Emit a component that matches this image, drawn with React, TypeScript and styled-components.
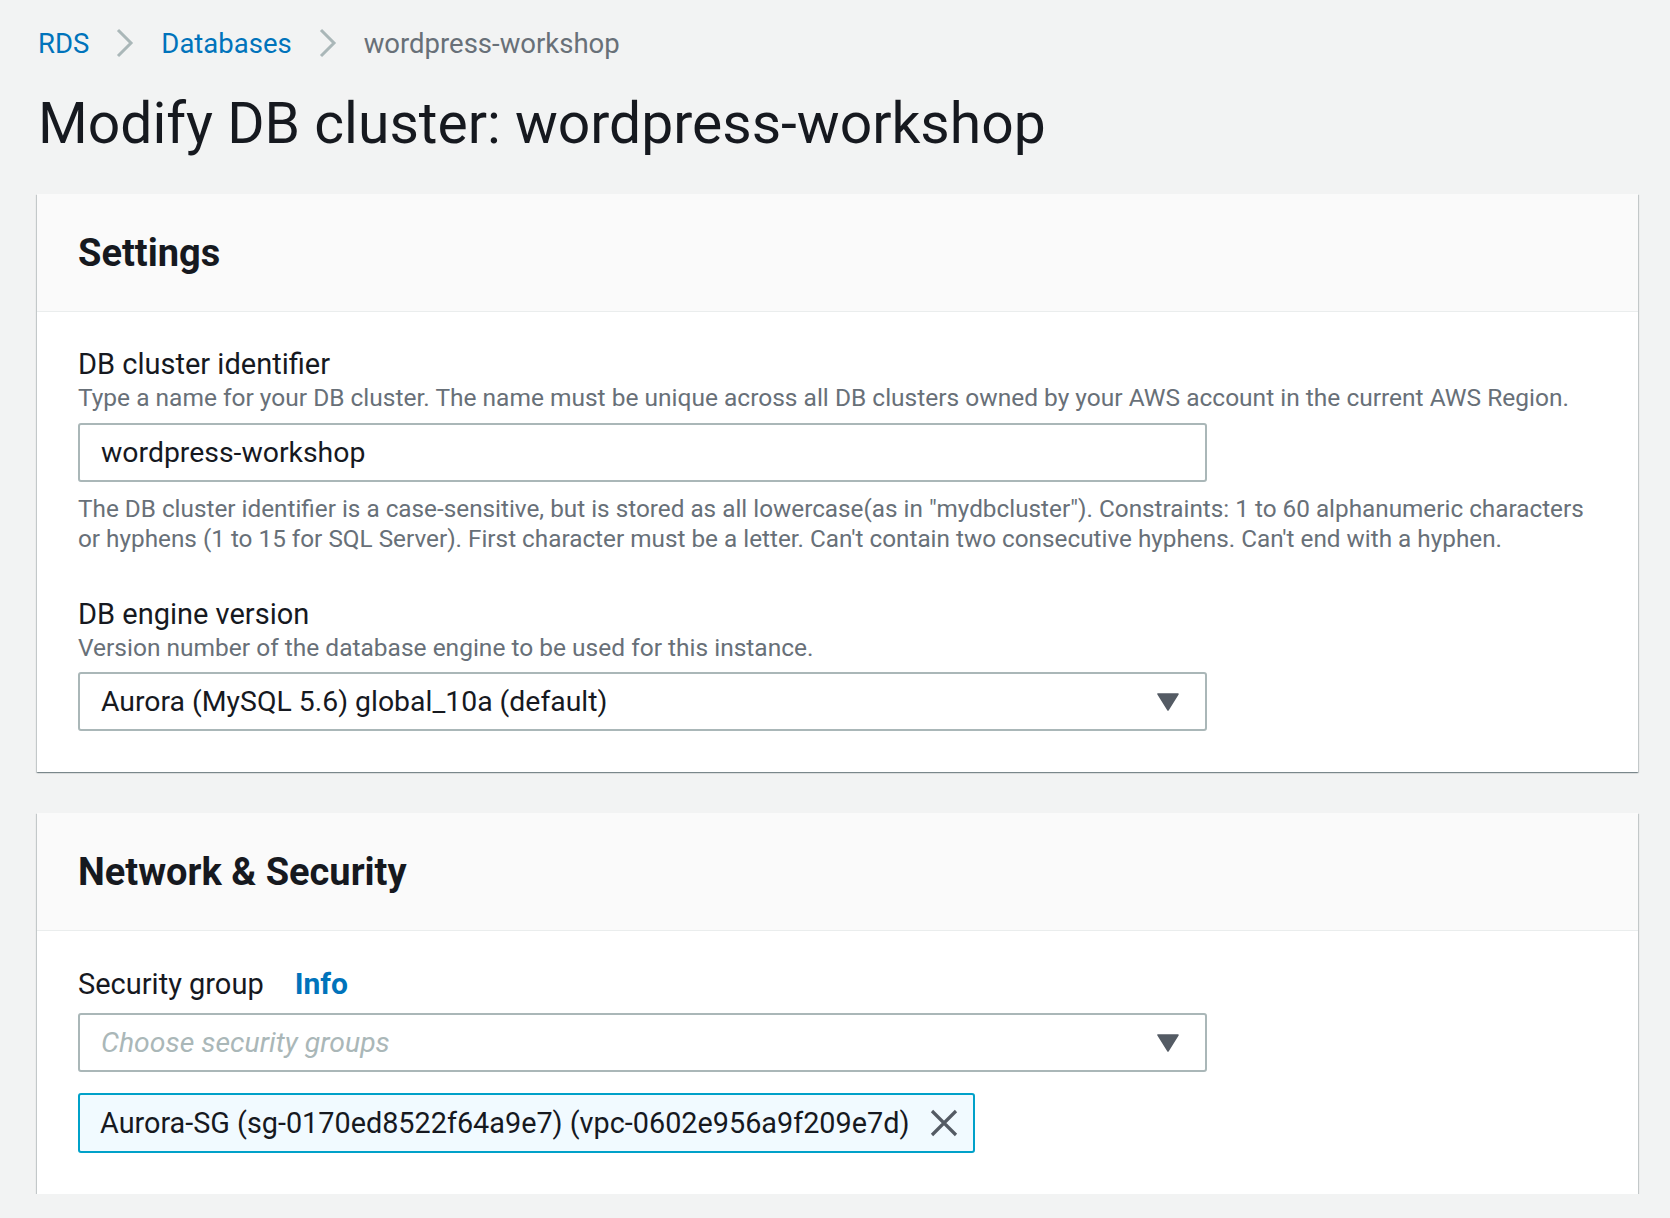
import styled, { createGlobalStyle } from "styled-components";

const GlobalStyle = createGlobalStyle`
    html, body {
        margin: 0;
        padding: 0;
        background: #f2f3f3;
        font-family: Roboto, "Liberation Sans", sans-serif;
        color: #16191f;
    }
`;

const Page = styled.div`
    padding: 26px 32px 0 37px;
`;

const Crumbs = styled.nav`
    display: flex;
    align-items: center;
    gap: 27px;
    height: 34px;
    padding-left: 1px;
    font-size: 27.5px;
`;

const CrumbLink = styled.a`
    color: #0073bb;
    text-decoration: none;
`;

const CrumbCurrent = styled.span`
    color: #687078;
`;

const Title = styled.h1`
    margin: 26px 0 0 1px;
    font-size: 57px;
    font-weight: 400;
    line-height: 76px;
    color: #16191f;
`;

const Card = styled.section<{ $top: number }>`
    margin-top: ${(p) => p.$top}px;
    background: #fff;
    box-shadow: 0 1px 1px 0 rgba(0, 28, 36, 0.3), 1px 1px 1px 0 rgba(0, 28, 36, 0.15),
        -1px 1px 1px 0 rgba(0, 28, 36, 0.15);
`;

const CardHeader = styled.header`
    display: flex;
    align-items: center;
    box-sizing: border-box;
    height: 118px;
    padding: 0 41px;
    background: #fafafa;
    border-bottom: 1px solid #eaeded;
`;

const CardTitle = styled.h2`
    margin: 0;
    font-size: 38px;
    font-weight: 700;
    color: #16191f;
`;

const CardBody = styled.div<{ $top: number; $bottom: number }>`
    padding: ${(p) => p.$top}px 41px ${(p) => p.$bottom}px;
`;

const Field = styled.div`
    & + & {
        margin-top: 43px;
    }
`;

const LabelRow = styled.div`
    display: flex;
    align-items: baseline;
    gap: 31px;
`;

const Label = styled.div`
    font-size: 29px;
    line-height: 34px;
    color: #16191f;
`;

const InfoLink = styled.a`
    font-size: 30px;
    font-weight: 700;
    color: #0073bb;
    text-decoration: none;
`;

const Description = styled.div`
    margin-top: 2px;
    font-size: 24.5px;
    line-height: 30px;
    color: #687078;
`;

const Constraint = styled.div`
    margin-top: 12px;
    font-size: 24.3px;
    line-height: 30px;
    color: #687078;
    white-space: nowrap;
`;

const InputBox = styled.div<{ $gap: number }>`
    display: flex;
    align-items: center;
    justify-content: space-between;
    box-sizing: border-box;
    width: 1129px;
    height: 59px;
    margin-top: ${(p) => p.$gap}px;
    padding: 0 26px 0 21px;
    border: 2px solid #aab7b8;
    border-radius: 3px;
    background: #fff;
    font-size: 28.4px;
    color: #16191f;
`;

const Placeholder = styled.span`
    font-style: italic;
    color: #aab7b8;
`;

const Token = styled.div`
    display: inline-flex;
    align-items: center;
    gap: 21px;
    box-sizing: border-box;
    height: 60px;
    margin-top: 21px;
    padding: 0 15px 0 20px;
    border: 2px solid #00a1c9;
    border-radius: 3px;
    background: #f1faff;
    font-size: 28.8px;
    color: #16191f;
`;

const Caret = () => (
    <svg width="22" height="18" viewBox="0 0 22 18">
        <path d="M1 1h20L11 17z" fill="#545b64" stroke="#545b64" strokeWidth="1.5" strokeLinejoin="round" />
    </svg>
);

const Chevron = () => (
    <svg width="18" height="30" viewBox="0 0 18 30">
        <path d="M2 2l13 13L2 28" fill="none" stroke="#aab7b8" strokeWidth="3" />
    </svg>
);

const Close = () => (
    <svg width="28" height="28" viewBox="0 0 28 28">
        <path d="M2 2l24 24M26 2L2 26" stroke="#545b64" strokeWidth="3.2" />
    </svg>
);

export default function App() {
    return (
        <Page>
            <GlobalStyle />
            <Crumbs>
                <CrumbLink href="#">RDS</CrumbLink>
                <Chevron />
                <CrumbLink href="#">Databases</CrumbLink>
                <Chevron />
                <CrumbCurrent>wordpress-workshop</CrumbCurrent>
            </Crumbs>
            <Title>Modify DB cluster: wordpress-workshop</Title>

            <Card $top={32}>
                <CardHeader>
                    <CardTitle>Settings</CardTitle>
                </CardHeader>
                <CardBody $top={35} $bottom={41}>
                    <Field>
                        <Label>DB cluster identifier</Label>
                        <Description>
                            Type a name for your DB cluster. The name must be unique across all DB clusters owned by your AWS account in the current AWS Region.
                        </Description>
                        <InputBox $gap={10}>wordpress-workshop</InputBox>
                        <Constraint>
                            The DB cluster identifier is a case-sensitive, but is stored as all lowercase(as in "mydbcluster"). Constraints: 1 to 60 alphanumeric characters
                            <br />
                            or hyphens (1 to 15 for SQL Server). First character must be a letter. Can't contain two consecutive hyphens. Can't end with a hyphen.
                        </Constraint>
                    </Field>
                    <Field>
                        <Label>DB engine version</Label>
                        <Description>Version number of the database engine to be used for this instance.</Description>
                        <InputBox $gap={9}>
                            <span>Aurora (MySQL 5.6) global_10a (default)</span>
                            <Caret />
                        </InputBox>
                    </Field>
                </CardBody>
            </Card>

            <Card $top={41}>
                <CardHeader>
                    <CardTitle>Network &amp; Security</CardTitle>
                </CardHeader>
                <CardBody $top={35} $bottom={41}>
                    <Field>
                        <LabelRow>
                            <Label>Security group</Label>
                            <InfoLink href="#">Info</InfoLink>
                        </LabelRow>
                        <InputBox $gap={12}>
                            <Placeholder>Choose security groups</Placeholder>
                            <Caret />
                        </InputBox>
                        <Token>
                            <span>Aurora-SG (sg-0170ed8522f64a9e7) (vpc-0602e956a9f209e7d)</span>
                            <Close />
                        </Token>
                    </Field>
                </CardBody>
            </Card>
        </Page>
    );
}
